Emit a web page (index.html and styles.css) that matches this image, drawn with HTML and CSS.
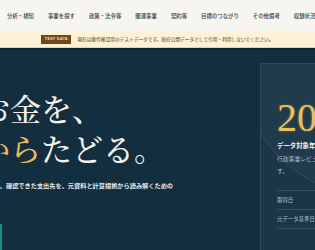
FILE: index.html
```html
<!DOCTYPE html>
<html lang="ja">
<head>
    <meta charset="UTF-8">
    <meta name="viewport" content="width=device-width, initial-scale=1.0">
    <title>支出先をたどる</title>
    <link rel="stylesheet" href="styles.css">
</head>
<body>
    <nav class="nav">
        <a href="#">分析・検知</a>
        <a href="#">事業を探す</a>
        <a href="#">政策・法令等</a>
        <a href="#">関連事業</a>
        <a href="#">契約等</a>
        <a href="#">目標のつながり</a>
        <a href="#">その他備考</a>
        <a href="#">収録状況</a>
    </nav>

    <div class="notice">
        <span class="badge">TEST DATA</span>
        <span>現在は動作確認用のテストデータです。政府公開データとして引用・利用しないでください。</span>
    </div>

    <section class="hero">
        <div class="hero-copy">
            <h1 class="title">
                <span class="line">お金を、</span>
                <span class="line"><em>から</em>たどる。</span>
            </h1>
            <p class="lead">公開データから、確認できた支出先を、元資料と計算根拠から読み解くための</p>
            <a href="#" class="cta"></a>
        </div>

        <aside class="card">
            <div class="year">2024</div>
            <div class="card-label">データ対象年度</div>
            <p class="card-desc">行政事業レビューシートの公開年度で<br>す。</p>
            <dl class="meta">
                <div class="meta-row"><dt>取得日</dt><dd>2025-01-15</dd></div>
                <div class="meta-row"><dt>元データ基準日</dt><dd>2024-12-31</dd></div>
            </dl>
        </aside>
    </section>
</body>
</html>
```

FILE: styles.css
```css
body {
    margin: 0;
    width: 315px;
    height: 250px;
    overflow: hidden;
    font-family: "Noto Sans CJK JP", sans-serif;
    background-color: #132f3f;
}

.nav {
    height: 31px;
    display: flex;
    align-items: center;
    gap: 14px;
    padding-left: 7px;
    background-color: #f7f5f0;
    white-space: nowrap;
    overflow: hidden;
}

.nav a {
    font-size: 5.4px;
    font-weight: 500;
    color: #3b3f44;
    text-decoration: none;
}

.notice {
    height: 16px;
    display: flex;
    align-items: center;
    justify-content: center;
    gap: 6px;
    background-color: #fdf1d6;
    border-bottom: 1px solid #e8d29c;
    font-size: 4.7px;
    color: #4a3a1e;
    white-space: nowrap;
}

.badge {
    width: 30px;
    height: 9px;
    display: flex;
    align-items: center;
    justify-content: center;
    background-color: #6d4a1d;
    color: #f3e3c1;
    font-family: "Liberation Sans", sans-serif;
    font-size: 3.6px;
    font-weight: bold;
    letter-spacing: 0.4px;
}

.hero {
    height: 200px;
    display: grid;
    grid-template-columns: 260px 220px;
    border-top: 2px solid #0c1f2a;
    background-color: #132f3f;
    overflow: hidden;
    position: relative;
}

.hero-copy {
    padding-top: 38px;
    white-space: nowrap;
}

.title {
    margin: 0 0 0 -21px;
    font-family: "Noto Serif CJK JP", "Noto Sans CJK JP", serif;
    font-size: 31px;
    font-weight: 500;
    line-height: 40px;
    color: #f4f1ea;
}

.title .line {
    display: block;
    height: 40px;
}

.title em {
    font-style: normal;
    color: #e8bb55;
}

.lead {
    margin: 13px 0 0 -43.5px;
    font-size: 6.2px;
    font-weight: bold;
    line-height: 10px;
    color: #e3e9ec;
}

.cta {
    display: block;
    width: 60px;
    height: 30px;
    margin: 33px 0 0 -62px;
    border: 2px solid #1f8c76;
}

.card {
    margin: 13px 0 2px;
    padding: 34px 16px 20px;
    background-color: #1b3747;
    border: 1px solid #2d4a5a;
    position: relative;
    overflow: hidden;
}

.card::before {
    content: "";
    position: absolute;
    left: -20px;
    top: -130px;
    width: 260px;
    height: 260px;
    border-radius: 50%;
    border: 1px solid rgba(255, 255, 255, 0.07);
    background-color: rgba(255, 255, 255, 0.025);
}

.year {
    position: relative;
    font-family: "Liberation Serif", serif;
    font-size: 40px;
    line-height: 40px;
    color: #eabf5c;
    text-shadow: 0 0 3px rgba(234, 191, 92, 0.35);
}

.card-label {
    position: relative;
    margin-top: 3px;
    font-size: 6.4px;
    font-weight: bold;
    line-height: 10px;
    color: #f4f4f2;
}

.card-desc {
    position: relative;
    margin: 2px 0 13px;
    font-size: 5.8px;
    line-height: 12px;
    color: #a9b7c0;
    white-space: nowrap;
}

.meta {
    margin: 0;
    position: relative;
}

.meta-row {
    height: 18px;
    display: flex;
    align-items: center;
    gap: 20px;
    border-top: 1px solid #33505f;
    font-size: 5.4px;
    color: #b3c0c8;
}

.meta-row:last-child {
    border-bottom: 1px solid #33505f;
}

.meta dt {
    width: 40px;
}

.meta dd {
    margin: 0;
}
```
